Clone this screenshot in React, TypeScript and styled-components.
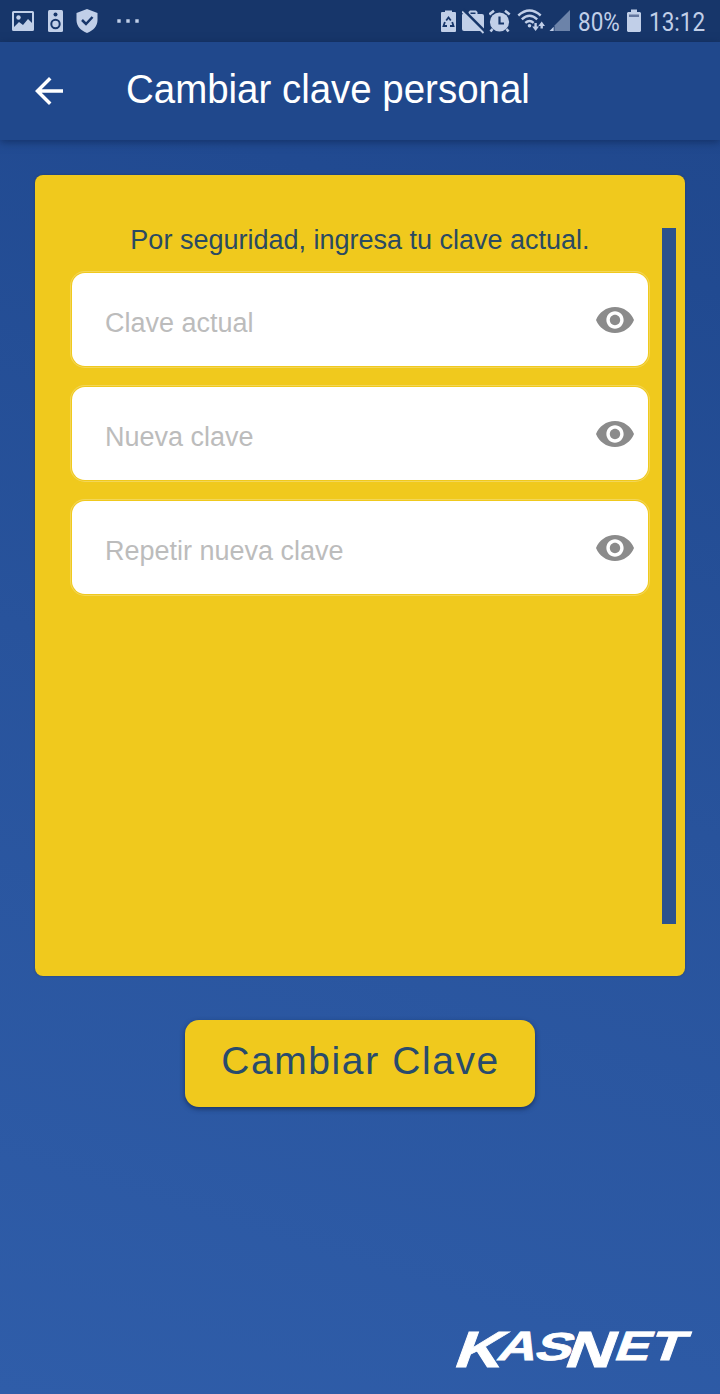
import React from 'react';
import styled, { createGlobalStyle } from 'styled-components';

const sans = '"Liberation Sans", Arial, Helvetica, sans-serif';
const yellow = '#f0c91d';
const tint = '#c1cfe8';
const bar = '#17366a';

const GlobalStyle = createGlobalStyle`
  *, *::before, *::after { box-sizing: border-box; }
  body { margin: 0; background: #2a559e; font-family: ${sans}; }
`;

const Screen = styled.div`
  display: flex;
  flex-direction: column;
  width: 720px;
  height: 1394px;
  overflow: hidden;
  background: linear-gradient(197deg, #20478b 0%, #214a91 18%, #28539c 52%, #2f5da9 100%);
`;

const StatusBar = styled.div`
  display: flex;
  flex: none;
  align-items: center;
  justify-content: space-between;
  height: 42px;
  padding: 0 14px 0 12px;
  background: ${bar};
  color: ${tint};
`;

const StatusGroup = styled.div`
  display: flex;
  align-items: center;
  height: 42px;
`;

const StatusIcon = styled.svg<{ $gap?: number }>`
  display: block;
  flex: none;
  height: 42px;
  margin-right: ${(p) => p.$gap ?? 0}px;
  fill: ${tint};
`;

const StatusText = styled.div<{ $width: number; $gap?: number }>`
  width: ${(p) => p.$width}px;
  margin-right: ${(p) => p.$gap ?? 0}px;
  padding-top: 3px;
  font: 400 25px/42px Roboto, sans-serif;
  white-space: nowrap;

  & > span {
    display: inline-block;
    transform: scaleX(0.9);
    transform-origin: 0 50%;
  }
`;

const AppBar = styled.header`
  display: flex;
  flex: none;
  align-items: center;
  height: 98px;
  padding-left: 35px;
  background: #20488c;
  box-shadow: 0 2px 8px rgba(10, 30, 70, 0.55);
`;

const BackButton = styled.button`
  display: flex;
  width: 28px;
  height: 28px;
  margin: 0 63px 0 0;
  padding: 0;
  border: 0;
  background: none;
`;

const Title = styled.h1`
  margin: -4px 0 0;
  color: #fff;
  font: 400 40px/48px ${sans};
  white-space: nowrap;
  transform: scaleX(0.961);
  transform-origin: 0 50%;
`;

const Main = styled.main`
  display: flex;
  flex: 1;
  flex-direction: column;
  align-items: center;
  padding: 35px 35px 15px;
`;

const Card = styled.section`
  display: flex;
  flex: none;
  gap: 14px;
  width: 650px;
  height: 801px;
  padding: 53px 9px 52px 37px;
  border-radius: 8px;
  background: ${yellow};
  box-shadow: 0 0 2px rgba(40, 50, 60, 0.6);
`;

const Form = styled.form`
  display: flex;
  flex: none;
  flex-direction: column;
  gap: 21px;
  width: 576px;
`;

const Hint = styled.p`
  margin: 0;
  color: #2a4a62;
  font: 400 27px/24px ${sans};
  text-align: center;
  white-space: nowrap;
`;

const Field = styled.label`
  display: flex;
  flex: none;
  align-items: center;
  justify-content: space-between;
  height: 93px;
  padding: 0 14px 0 33px;
  border-radius: 13px;
  background: #fff;
  box-shadow: 0 0 0 1px #f0c91d, 0 0 0 2px #f3d658;
`;

const Placeholder = styled.span`
  padding-top: 7px;
  color: #bcbcbc;
  font: 400 27px/32px ${sans};
  white-space: nowrap;
`;

const Eye = styled.svg`
  width: 38px;
  height: 26px;
  fill: #8b8b8b;
`;

const Scrollbar = styled.div`
  width: 14px;
  height: 696px;
  background: #2c528c;
`;

const SubmitButton = styled.button`
  flex: none;
  width: 350px;
  height: 87px;
  margin-top: 44px;
  padding: 0 0 5px 1px;
  border: 0;
  border-radius: 14px;
  background: ${yellow};
  box-shadow: 0 2px 5px rgba(15, 35, 75, 0.7);
  color: #284b6c;
  font: 400 39px/46px ${sans};
  letter-spacing: 1.6px;
  white-space: nowrap;
`;

const Brand = styled.svg`
  display: block;
  flex: none;
  align-self: flex-end;
  width: 275px;
  height: 70px;
  margin: auto -30px 0 0;
`;

const BrandText = styled.text`
  fill: #fff;
  stroke: #fff;
  stroke-width: 0.8px;
  font-family: ${sans};
  font-weight: 700;
`;

const EyeIcon = () => (
  <Eye viewBox="1 4.5 22 15" preserveAspectRatio="none">
    <path d="M12 4.5C7 4.5 2.73 7.61 1 12c1.73 4.39 6 7.5 11 7.5s9.27-3.11 11-7.5c-1.73-4.39-6-7.5-11-7.5zM12 17c-2.76 0-5-2.24-5-5s2.24-5 5-5 5 2.24 5 5-2.24 5-5 5zm0-8c-1.66 0-3 1.34-3 3s1.34 3 3 3 3-1.34 3-3-1.34-3-3-3z" />
  </Eye>
);

const fields = ['Clave actual', 'Nueva clave', 'Repetir nueva clave'];

const brandLetters = [
  { char: 'K', x: -1, sx: 1.28, size: 51, y: 36 },
  { char: 'A', x: 40, sx: 1.3, size: 41, y: 29 },
  { char: 'S', x: 77, sx: 1.42, size: 39, y: 28.5 },
  { char: 'N', x: 109.5, sx: 1.3, size: 51, y: 36 },
  { char: 'E', x: 157, sx: 1.28, size: 41, y: 29 },
  { char: 'T', x: 192, sx: 1.38, size: 41, y: 29 },
];

export default function App() {
  return (
    <Screen>
      <GlobalStyle />
      <StatusBar>
        <StatusGroup>
          <StatusIcon $gap={14} width="22" viewBox="0 0 22 42">
            <path fillRule="evenodd" d="M1.500 11h19a1.500 1.500 0 0 1 1.500 1.500v17a1.500 1.500 0 0 1-1.500 1.500h-19A1.500 1.500 0 0 1 0 29.500v-17A1.500 1.500 0 0 1 1.500 11zM2 13v14l5-5 4 3 5-6 4 4V13z" />
            <circle cx="6.5" cy="17.5" r="2.2" />
          </StatusIcon>
          <StatusIcon $gap={13} width="15" viewBox="0 0 15 42">
            <rect y="10" width="15" height="22" rx="1.5" />
            <circle cx="7.5" cy="14.5" r="2" fill={bar} />
            <circle cx="7.5" cy="24" r="4.2" fill="none" stroke={bar} strokeWidth="2" />
          </StatusIcon>
          <StatusIcon $gap={19} width="22" viewBox="0 0 22 42">
            <path d="M11 9l10.5 4v7c0 6-4.3 10.7-10.5 13C4.8 30.7.5 26 .5 20v-7z" />
            <path d="M6 20l4 4 6.5-7" fill="none" stroke={bar} strokeWidth="2.5" />
          </StatusIcon>
          <StatusIcon width="24" viewBox="0 0 24 42">
            <path d="M.3 19.3h3.400v3.400H.3zM9.300 19.300h3.400v3.400H9.300zM18.300 19.300h3.400v3.400h-3.400z" />
          </StatusIcon>
        </StatusGroup>
        <StatusGroup>
          <StatusIcon $gap={6} width="15" viewBox="0 0 15 42">
            <path d="M4 12v-1.500h7V12h3a1 1 0 0 1 1 1v18a1 1 0 0 1-1 1H1a1 1 0 0 1-1-1V13a1 1 0 0 1 1-1z" />
            <path d="M5.200 20.500l2.300-3 2.300 3M11.200 22l1.300 4H9M6 26H2.500l1.400-4" fill="none" stroke={bar} strokeWidth="1.800" />
          </StatusIcon>
          <StatusIcon $gap={4} width="23" viewBox="0 0 23 42">
            <path d="M1 14h5.500v-2l1.500-1.500h6l1.500 1.500v2H20q2 0 2 2v15H2q-2 0-2-2V15q0-1 1-1zM8.500 12.500V14h5v-1.500z" fillRule="evenodd" />
            <path d="M1 9.500l22 22" stroke={bar} strokeWidth="2.800" />
            <path d="M0 11.500l21.500 21.500" stroke={tint} strokeWidth="1.800" />
          </StatusIcon>
          <StatusIcon $gap={6} width="22" viewBox="0 0 22 42">
            <circle cx="10.500" cy="22" r="9.600" />
            <path d="M.3 14.500L5 10.800M20.700 14.500L16 10.800M3.500 29l-2 2.500M17.500 29l2 2.500" stroke={tint} strokeWidth="2.600" />
            <path d="M10.500 16.500v7H15" fill="none" stroke={bar} strokeWidth="2.200" />
          </StatusIcon>
          <StatusIcon $gap={4} width="28" viewBox="0 0 28 42">
            <g fill="none" stroke={tint} strokeWidth="2.400">
              <path d="M1.300 15.500q11.200-10 22.400 0" />
              <path d="M4.800 19.300q7.700-7 15.400 0" />
              <path d="M8.300 22.800q4.200-3.800 8.400 0" />
              <path d="M18.600 23v5M24.700 28.500V25" />
            </g>
            <circle cx="12.500" cy="25.800" r="1.800" />
            <path d="M15.200 26.600h6.800l-3.400 4.400zM21.300 26h6.700l-3.300-4.400z" />
          </StatusIcon>
          <StatusIcon $gap={8} width="21" viewBox="0 0 21 42">
            <path d="M.5 31l4.200-4.200V31z" />
            <path d="M5.500 31v-5.400L21 10v21z" opacity=".5" />
          </StatusIcon>
          <StatusText $width={42} $gap={7}><span>80%</span></StatusText>
          <StatusIcon $gap={8} width="14" viewBox="0 0 14 42">
            <path d="M4 12V9.500h6V12h3l1 1v18l-1 1H1l-1-1V13l1-1z" />
            <path d="M2 14.500h10V17H2z" fill="#64779f" />
          </StatusIcon>
          <StatusText $width={57}><span>13:12</span></StatusText>
        </StatusGroup>
      </StatusBar>
      <AppBar>
        <BackButton aria-label="Atrás">
          <svg width="28" height="28" viewBox="4 4 16 16" fill="#fff">
            <path d="M20 11H7.83l5.59-5.59L12 4l-8 8 8 8 1.41-1.41L7.83 13H20v-2z" />
          </svg>
        </BackButton>
        <Title>Cambiar clave personal</Title>
      </AppBar>
      <Main>
        <Card>
          <Form>
            <Hint>Por seguridad, ingresa tu clave actual.</Hint>
            {fields.map((name) => (
              <Field key={name}>
                <Placeholder>{name}</Placeholder>
                <EyeIcon />
              </Field>
            ))}
          </Form>
          <Scrollbar />
        </Card>
        <SubmitButton>Cambiar Clave</SubmitButton>
        <Brand viewBox="0 0 275 70" role="img" aria-label="KASNET">
          <g transform="translate(16 22) skewX(-20)">
            {brandLetters.map((l) => (
              <BrandText key={l.char} transform={`translate(${l.x + 10} ${l.y}) scale(${l.sx} 1)`} fontSize={l.size}>
                {l.char}
              </BrandText>
            ))}
          </g>
        </Brand>
      </Main>
    </Screen>
  );
}
